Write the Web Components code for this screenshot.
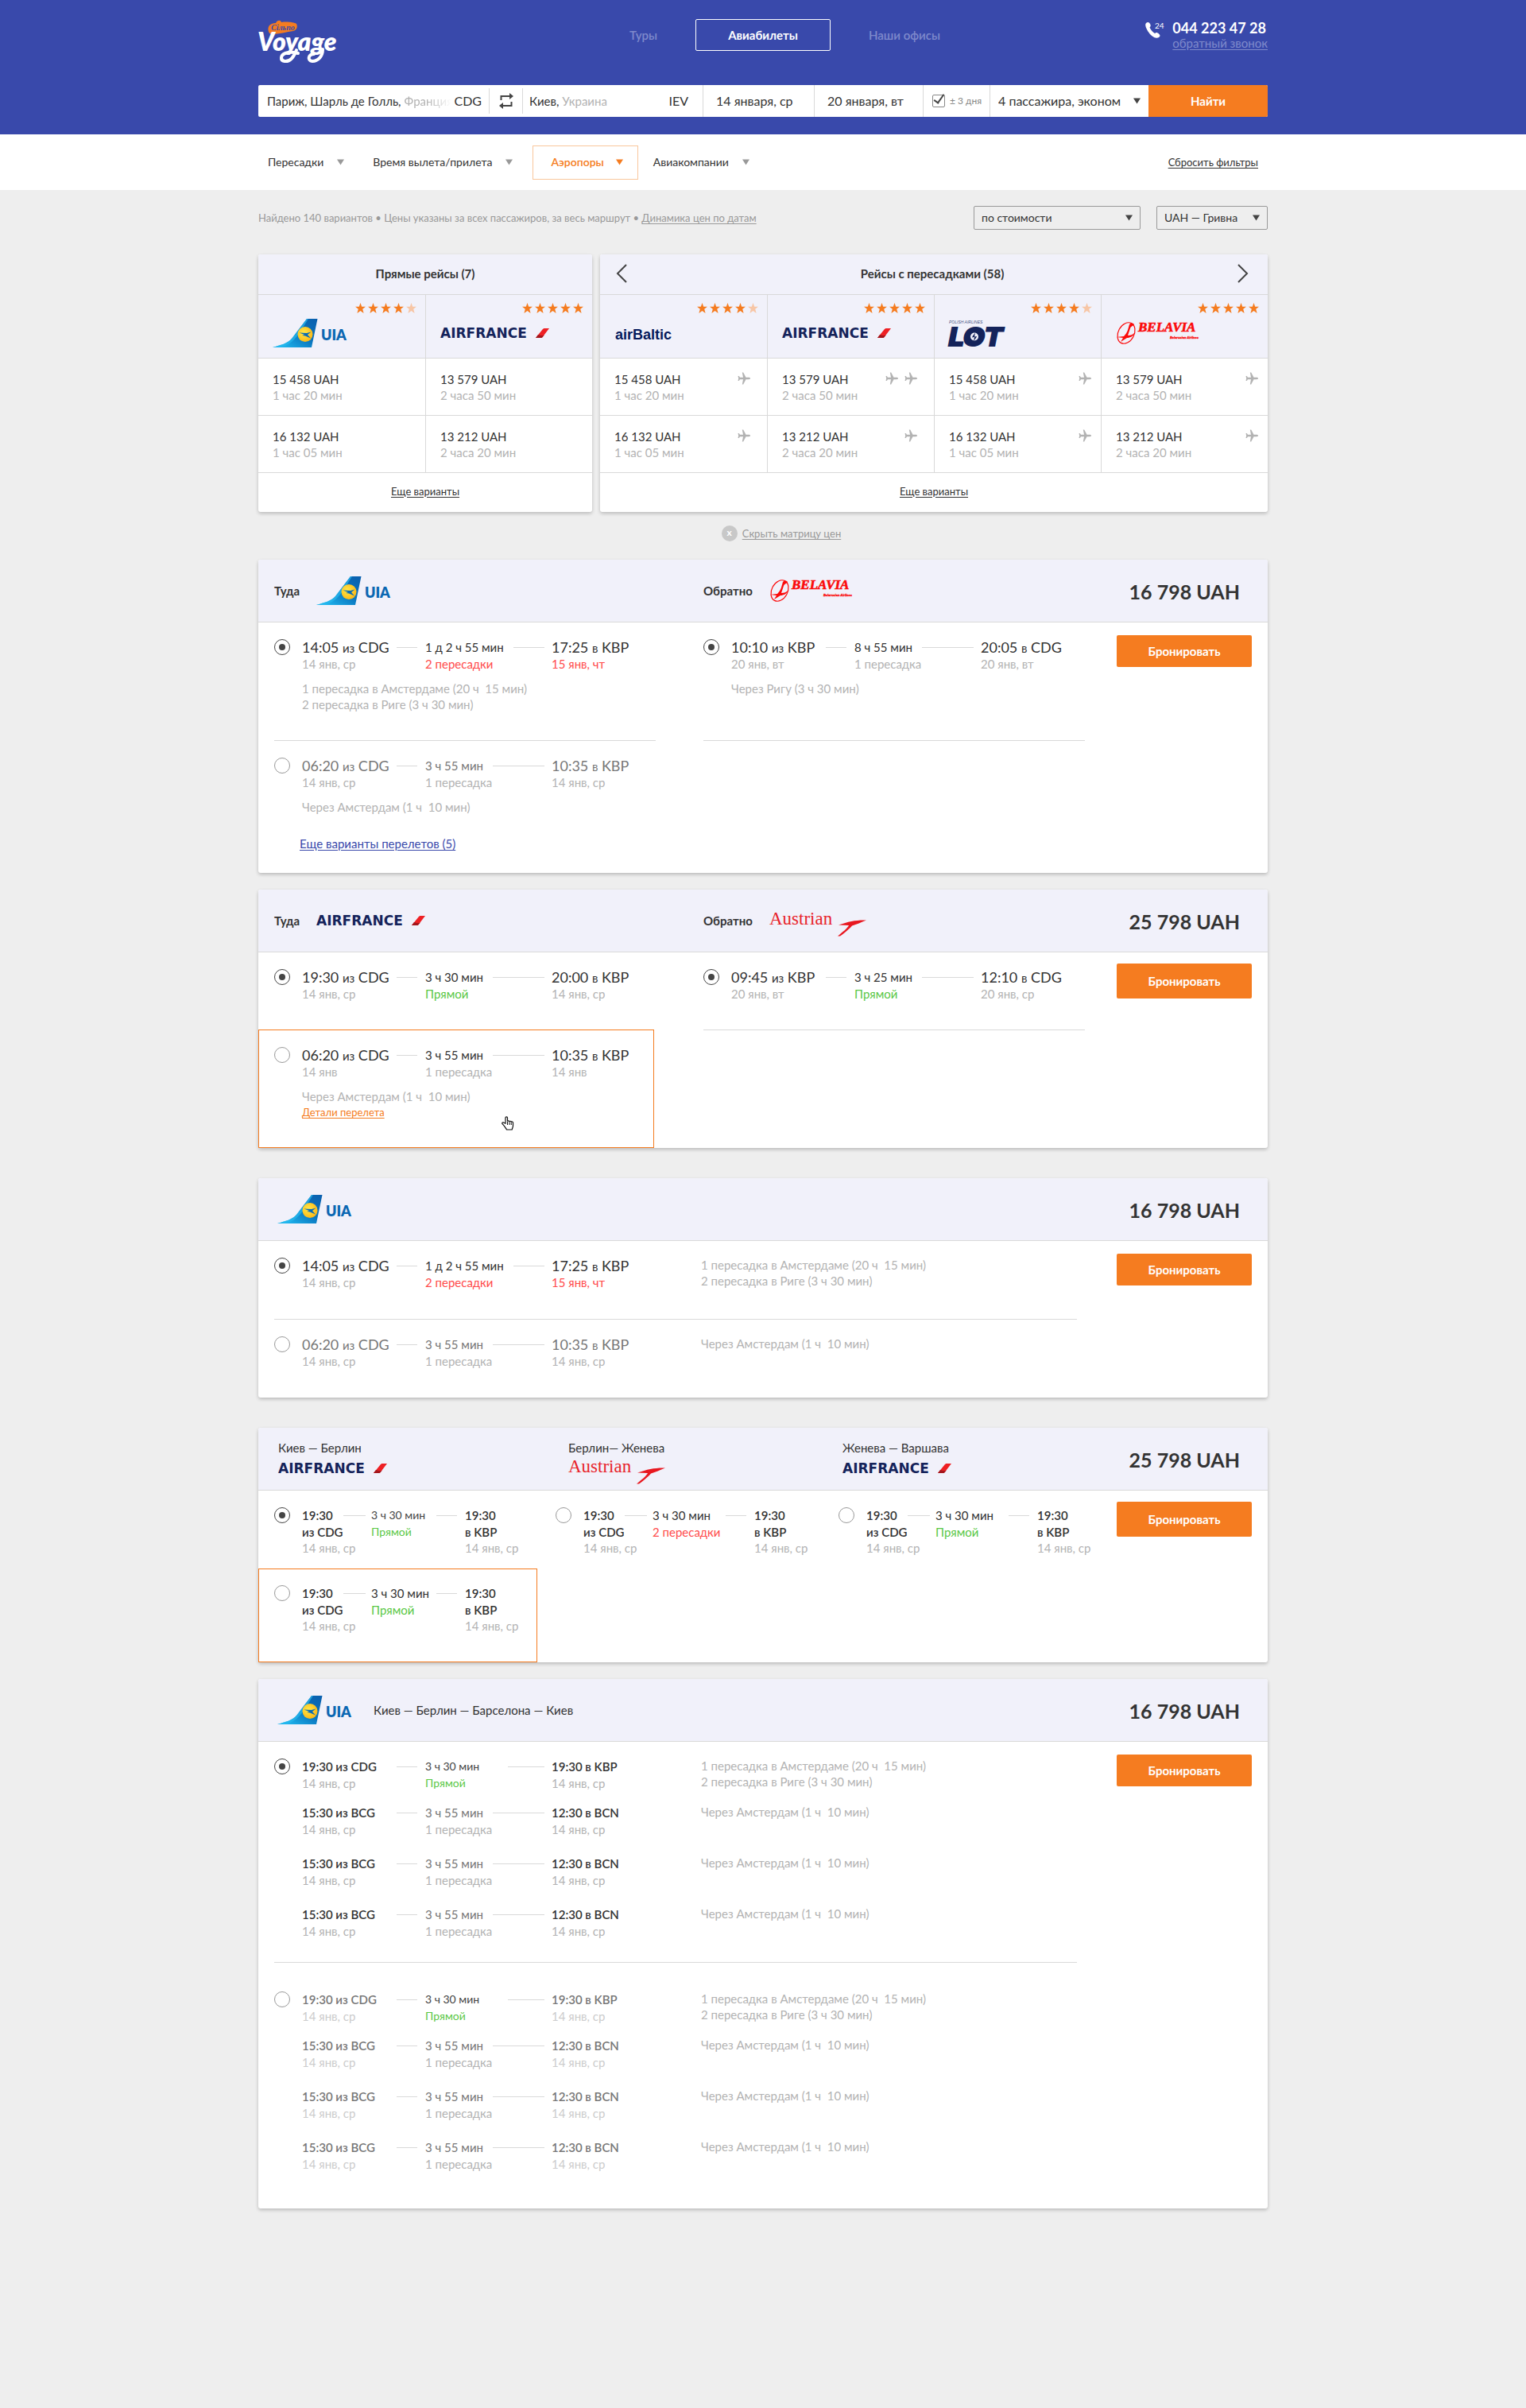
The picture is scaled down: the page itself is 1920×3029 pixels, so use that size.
<!DOCTYPE html>
<html lang="ru">
<head>
<meta charset="utf-8">
<meta name="viewport" content="width=device-width, initial-scale=1">
<title>Voyage — Авиабилеты</title>
<style>
  :root {
    --brand: #3949ab;
    --accent: #f57c20;
    --ink: #333333;
    --soft: #b3b3b3;
    --line: #d9d9d9;
    --tint: #f1f1fa;
    --page: 1270px;
  }
  body {
    margin: 0;
    background: #eeeeee;
    color: var(--ink);
    font: 15px/20px Lato, "Noto Sans", sans-serif;
  }
  main { max-width: var(--page); margin: 0 auto; padding-bottom: 60px; }
  .results { display: flex; flex-direction: column; gap: 38px; }
  .group { display: flex; flex-direction: column; gap: 21px; }
  .way { display: flex; align-items: center; gap: 21px; font-weight: 700; }
  .route { display: flex; flex-direction: column; gap: 4px; }
  .route airline-logo { height: 24px; display: flex; align-items: center; }
  p { margin: 0; }
  a { color: inherit; text-underline-offset: 2px; }
  .more { color: var(--brand); }
  .details { color: var(--accent); font-size: 13px; }
</style>
</head>
<body>

<site-header></site-header>
<filter-bar></filter-bar>

<main>
  <results-toolbar></results-toolbar>
  <price-matrix></price-matrix>

  <div class="results">
    <div class="group">
      <fare-card price="16 798 UAH" layout="two">
        <div slot="head" class="way">Туда <airline-logo name="uia"></airline-logo></div>
        <div slot="head" class="way">Обратно <airline-logo name="belavia"></airline-logo></div>

        <flight-option checked divider>
          <flight-leg dep="14:05" from="CDG" dep-date="14 янв, ср" time="1 д 2 ч 55 мин" stops="2 пересадки" arr="17:25" to="KBP" arr-date="15 янв, чт" late></flight-leg>
          <p slot="note">1 пересадка в Амстердаме (20 ч&nbsp; 15 мин)</p>
          <p slot="note">2 пересадка в Риге (3 ч 30 мин)</p>
        </flight-option>
        <flight-option checked divider>
          <flight-leg dep="10:10" from="KBP" dep-date="20 янв, вт" time="8 ч 55 мин" stops="1 пересадка" arr="20:05" to="CDG" arr-date="20 янв, вт"></flight-leg>
          <p slot="note">Через Ригу (3 ч 30 мин)</p>
        </flight-option>
        <flight-option muted>
          <flight-leg dep="06:20" from="CDG" dep-date="14 янв, ср" time="3 ч 55 мин" stops="1 пересадка" arr="10:35" to="KBP" arr-date="14 янв, ср"></flight-leg>
          <p slot="note">Через Амстердам (1 ч&nbsp; 10 мин)</p>
        </flight-option>
        <a slot="more" class="more" href="#more">Еще варианты перелетов (5)</a>
      </fare-card>

      <fare-card price="25 798 UAH" layout="two" tall>
        <div slot="head" class="way">Туда <airline-logo name="airfrance"></airline-logo></div>
        <div slot="head" class="way">Обратно <airline-logo name="austrian"></airline-logo></div>

        <flight-option checked>
          <flight-leg dep="19:30" from="CDG" dep-date="14 янв, ср" time="3 ч 30 мин" stops="Прямой" arr="20:00" to="KBP" arr-date="14 янв, ср"></flight-leg>
        </flight-option>
        <flight-option checked divider>
          <flight-leg dep="09:45" from="KBP" dep-date="20 янв, вт" time="3 ч 25 мин" stops="Прямой" arr="12:10" to="CDG" arr-date="20 янв, ср"></flight-leg>
        </flight-option>
        <flight-option active pointer>
          <flight-leg dep="06:20" from="CDG" dep-date="14 янв" time="3 ч 55 мин" stops="1 пересадка" arr="10:35" to="KBP" arr-date="14 янв"></flight-leg>
          <p slot="note">Через Амстердам (1 ч&nbsp; 10 мин)</p>
          <a slot="note" class="details" href="#details">Детали перелета</a>
        </flight-option>
      </fare-card>
    </div>

    <div class="group">
      <fare-card price="16 798 UAH" layout="one">
        <airline-logo slot="head" name="uia"></airline-logo>
        <flight-option checked divider side>
          <flight-leg dep="14:05" from="CDG" dep-date="14 янв, ср" time="1 д 2 ч 55 мин" stops="2 пересадки" arr="17:25" to="KBP" arr-date="15 янв, чт" late><p>1 пересадка в Амстердаме (20 ч&nbsp; 15 мин)</p><p>2 пересадка в Риге (3 ч 30 мин)</p></flight-leg>
        </flight-option>
        <flight-option muted side>
          <flight-leg dep="06:20" from="CDG" dep-date="14 янв, ср" time="3 ч 55 мин" stops="1 пересадка" arr="10:35" to="KBP" arr-date="14 янв, ср"><p>Через Амстердам (1 ч&nbsp; 10 мин)</p></flight-leg>
        </flight-option>
      </fare-card>
    </div>

    <div class="group">
      <fare-card price="25 798 UAH" layout="three" tall>
        <div slot="head" class="route">Киев — Берлин <airline-logo name="airfrance"></airline-logo></div>
        <div slot="head" class="route">Берлин— Женева <airline-logo name="austrian"></airline-logo></div>
        <div slot="head" class="route">Женева — Варшава <airline-logo name="airfrance"></airline-logo></div>

        <flight-option checked tight>
          <flight-leg kind="stacked" light dep="19:30" from="CDG" dep-date="14 янв, ср" time="3 ч 30 мин" stops="Прямой" arr="19:30" to="KBP" arr-date="14 янв, ср"></flight-leg>
        </flight-option>
        <flight-option tight>
          <flight-leg kind="stacked" wide dep="19:30" from="CDG" dep-date="14 янв, ср" time="3 ч 30 мин" stops="2 пересадки" late-stops arr="19:30" to="KBP" arr-date="14 янв, ср"></flight-leg>
        </flight-option>
        <flight-option tight>
          <flight-leg kind="stacked" wide dep="19:30" from="CDG" dep-date="14 янв, ср" time="3 ч 30 мин" stops="Прямой" arr="19:30" to="KBP" arr-date="14 янв, ср"></flight-leg>
        </flight-option>
        <flight-option active narrow>
          <flight-leg kind="stacked" dep="19:30" from="CDG" dep-date="14 янв, ср" time="3 ч 30 мин" stops="Прямой" arr="19:30" to="KBP" arr-date="14 янв, ср"></flight-leg>
        </flight-option>
      </fare-card>

      <fare-card price="16 798 UAH" layout="one">
        <airline-logo slot="head" name="uia"></airline-logo>
        <p slot="head">Киев — Берлин — Барселона — Киев</p>

        <flight-option checked divider side multi>
          <flight-leg kind="compact" light short dep="19:30" from="CDG" dep-date="14 янв, ср" time="3 ч 30 мин" stops="Прямой" arr="19:30" to="KBP" arr-date="14 янв, ср"><p>1 пересадка в Амстердаме (20 ч&nbsp; 15 мин)</p><p>2 пересадка в Риге (3 ч 30 мин)</p></flight-leg>
          <flight-leg kind="compact" dim dep="15:30" from="BCG" dep-date="14 янв, ср" time="3 ч 55 мин" stops="1 пересадка" arr="12:30" to="BCN" arr-date="14 янв, ср"><p>Через Амстердам (1 ч&nbsp; 10 мин)</p></flight-leg>
          <flight-leg kind="compact" dim dep="15:30" from="BCG" dep-date="14 янв, ср" time="3 ч 55 мин" stops="1 пересадка" arr="12:30" to="BCN" arr-date="14 янв, ср"><p>Через Амстердам (1 ч&nbsp; 10 мин)</p></flight-leg>
          <flight-leg kind="compact" dim dep="15:30" from="BCG" dep-date="14 янв, ср" time="3 ч 55 мин" stops="1 пересадка" arr="12:30" to="BCN" arr-date="14 янв, ср"><p>Через Амстердам (1 ч&nbsp; 10 мин)</p></flight-leg>
        </flight-option>
        <flight-option muted side multi roomy>
          <flight-leg kind="compact" light short dep="19:30" from="CDG" dep-date="14 янв, ср" time="3 ч 30 мин" stops="Прямой" arr="19:30" to="KBP" arr-date="14 янв, ср"><p>1 пересадка в Амстердаме (20 ч&nbsp; 15 мин)</p><p>2 пересадка в Риге (3 ч 30 мин)</p></flight-leg>
          <flight-leg kind="compact" dim dep="15:30" from="BCG" dep-date="14 янв, ср" time="3 ч 55 мин" stops="1 пересадка" arr="12:30" to="BCN" arr-date="14 янв, ср"><p>Через Амстердам (1 ч&nbsp; 10 мин)</p></flight-leg>
          <flight-leg kind="compact" dim dep="15:30" from="BCG" dep-date="14 янв, ср" time="3 ч 55 мин" stops="1 пересадка" arr="12:30" to="BCN" arr-date="14 янв, ср"><p>Через Амстердам (1 ч&nbsp; 10 мин)</p></flight-leg>
          <flight-leg kind="compact" dim dep="15:30" from="BCG" dep-date="14 янв, ср" time="3 ч 55 мин" stops="1 пересадка" arr="12:30" to="BCN" arr-date="14 янв, ср"><p>Через Амстердам (1 ч&nbsp; 10 мин)</p></flight-leg>
        </flight-option>
      </fare-card>
    </div>
  </div>
</main>

<script>
const base = `
  *, *::before { box-sizing: border-box; }
  button, input, select { font: inherit; color: inherit; margin: 0; padding: 0; border: 0; background: none; border-radius: 0; outline-offset: 2px; }
  button, select { cursor: pointer; }
  p { margin: 0; }
  a { color: inherit; text-underline-offset: 2px; }
`;
const define = (name, render, connected) => customElements.define(name, class extends HTMLElement {
  constructor() { super(); this.attachShadow({ mode: 'open' }); }
  connectedCallback() {
    this.shadowRoot.innerHTML = render(this);
    if (connected) connected(this);
  }
});
const caret = `<svg class="caret" width="9" height="8" viewBox="0 0 9 8" aria-hidden="true"><path d="M0 .5h9L4.500 7.500z" fill="currentColor"/></svg>`;

/* Airline marks */
const logos = {
  uia: `<svg width="93" height="36" viewBox="0 0 93 36" role="img" aria-label="UIA">
    <defs>
      <linearGradient id="tail" x1="0" y1="1" x2="1" y2="0"><stop offset=".1" stop-color="#1fb6ee"/><stop offset=".55" stop-color="#0a74bd"/><stop offset="1" stop-color="#0a5fae"/></linearGradient>
      <radialGradient id="sun" cx=".4" cy=".4" r=".65"><stop offset="0" stop-color="#ffe94a"/><stop offset="1" stop-color="#fbb615"/></radialGradient>
    </defs>
    <path d="M0 36C10 33 19 31 24 25L43 0h13.500L49 36z" fill="url(#tail)"/>
    <path d="M0 36C10 33 19 31 24 25L43 0h2C36 14 32 24 20 32c-5 3-10 4-20 4z" fill="#27b9ee" opacity=".7"/>
    <circle cx="41" cy="19.500" r="9.500" fill="url(#sun)"/>
    <path d="M33.500 17.500l9.500.5 5.500-1.500-4.500 3.500 4 4.500-7-3-4-.5 3-1z" fill="#0a6ab4"/>
    <text x="61" y="27" font-family="Lato, sans-serif" font-weight="800" font-size="18" fill="#0b67b2">UIA</text></svg>`,
  airfrance: `<svg width="138" height="14" viewBox="0 0 138 14" role="img" aria-label="Air France">
    <text x="0" y="13" font-family="DejaVu Sans, sans-serif" font-weight="bold" font-size="17" fill="#14235a">AIRFRANCE</text>
    <path d="M120 13l8.500-10.500c.8-1 1.500-1.500 2.800-1.500H137l-8 10.500c-.8 1-1.500 1.500-2.800 1.500z" fill="#ee2024"/>
    <path d="M120 13l3-4c2 .8 5 1.500 8 .5l-2 2c-.8 1-1.500 1.500-2.800 1.500z" fill="#a3161c"/></svg>`,
  airbaltic: `<svg width="74" height="22" viewBox="0 0 74 22" role="img" aria-label="airBaltic">
    <text x="1" y="19" font-family="Liberation Sans Narrow, Liberation Sans, sans-serif" font-weight="bold" font-size="18" fill="#051a5c">airBaltic</text></svg>`,
  lot: `<svg width="76" height="34" viewBox="0 0 76 34" role="img" aria-label="LOT Polish Airlines">
    <text x="0" y="5" font-family="Liberation Sans, sans-serif" font-style="italic" font-size="5" fill="#4a5685">POLISH AIRLINES</text>
    <text x="-1" y="33" font-family="DejaVu Sans, sans-serif" font-style="italic" font-weight="bold" font-size="32" fill="#14235a" stroke="#14235a" stroke-width="2">LOT</text>
    <circle cx="32" cy="21.500" r="8" fill="#14235a"/><circle cx="32" cy="21.500" r="5" fill="#f1f1fa"/>
    <path d="M33 16.500c-1 2-3 3-4 6l3-.5-1 5c1.500-2 3.500-4 4-6l-3 .5z" fill="#14235a"/></svg>`,
  belavia: `<svg width="106" height="28" viewBox="0 0 106 28" role="img" aria-label="Belavia">
    <ellipse cx="13" cy="14" rx="10" ry="14" transform="rotate(28 13 14)" fill="none" stroke="#fb0a0a" stroke-width="1.200"/>
    <path d="M17 3c3-2 5-1 6 0-1 2-4 2-5 5l-3 9c4 0 6-1 9-4-2 5-6 7-10 7L6 25l3-5-8-1 9-1c2-2 4-5 5-8z" fill="#fb0a0a"/>
    <text x="28" y="12" font-family="Liberation Serif, serif" font-style="italic" font-weight="bold" font-size="17" fill="#fb0a0a" stroke="#fb0a0a" stroke-width=".6">BELAVIA</text>
    <text x="104" y="21" text-anchor="end" font-family="Liberation Sans, sans-serif" font-style="italic" font-weight="bold" font-size="4" fill="#fb0a0a" stroke="#fb0a0a" stroke-width=".3">Belarusian Airlines</text></svg>`,
  austrian: `<svg width="124" height="40" viewBox="0 0 124 40" role="img" aria-label="Austrian">
    <text x="0" y="25" font-family="Liberation Serif, serif" font-weight="400" font-size="23" fill="#e8232a">Austrian</text>
    <path d="M122 19.500C110 19 100 21 87 25.500l13 .5c-2 4-8 8.500-14 13.500h3c6-4 12-9.500 15-13 6-2 11-4 18-7z" fill="#e8171f"/></svg>`
};
define('airline-logo', el => `<style>${base} :host { display: inline-flex; } svg { display: block; overflow: visible; }</style>${logos[el.getAttribute('name')]}`);

/* Star rating out of five */
define('star-rating', el => {
  const n = +el.getAttribute('value');
  const star = i => `<svg width="13" height="13" viewBox="0 0 13 13"><path d="M6.500 0l1.700 4.700H13L9.200 7.800l1.400 5.200-4.100-3.100L2.400 13l1.400-5.200L0 4.700h4.800z" fill="${i < n ? '#f57c20' : '#f7c6a6'}"/></svg>`;
  return `<style>${base} :host { display: flex; gap: 3px; justify-content: flex-end; } svg { display: block; }</style>${[0, 1, 2, 3, 4].map(star).join('')}`;
});

/* Blue top area with logo, navigation, phone and search form */
define('site-header', () => `<style>${base}
  :host { display: block; background: var(--brand); color: #fff; padding: 24px 20px 22px; }
  .wrap { max-width: var(--page); margin: 0 auto; }
  .top { display: grid; grid-template-columns: 1fr auto 1fr; align-items: start; min-height: 83px; }
  .logo { padding-top: 2px; line-height: 0; }
  svg { overflow: visible; }
  nav { display: inline-grid; grid-template-columns: 1fr 170px 1fr; gap: 48px; align-items: center; color: #7f89cb; font-weight: 600; }
  nav a { text-decoration: none; }
  nav a:first-child { justify-self: end; }
  nav .on { color: #fff; border: 1px solid #fff; border-radius: 2px; height: 40px; display: grid; place-items: center; font-weight: 700; }
  .phone { justify-self: end; display: grid; grid-template-columns: auto auto; column-gap: 10px; padding-top: 2px; line-height: 19px; }
  .phone b { font-size: 18px; }
  .phone a { grid-column: 2; color: #7f89cb; }
  .tel { display: flex; padding-top: 2px; height: 19px; }
</style>
<div class="wrap">
  <div class="top">
    <a class="logo" href="#"><svg width="104" height="54" viewBox="0 0 104 54" role="img" aria-label="Сільпо Voyage">
      <path d="M13 14C11 8 14 3 22 3c2-4 6-4 7-1 7-1 16 0 19 2 2 4 0 8-4 9-8 1-18 4-27 4-2 0-3-1-4-3z" fill="#f57c20"/>
      <text x="16" y="12" font-family="Liberation Serif, serif" font-style="italic" font-weight="bold" font-size="10" fill="#3949ab">Сільпо</text>
      <text x="-1" y="38" font-family="Lato, sans-serif" font-style="italic" font-weight="800" font-size="32" fill="#fff">Voyage</text>
      <path d="M50 41c-4-1-10-2-16 0-6 2-7 9-1 10 7 1 12-6 15-14" fill="none" stroke="#fff" stroke-width="4" stroke-linecap="round"/>
      <path d="M70 42c-7 0-9 8-2 9 7 0 13-6 13-15" fill="none" stroke="#fff" stroke-width="4" stroke-linecap="round"/></svg></a>
    <nav><a href="#tours">Туры</a><a class="on" href="#avia">Авиабилеты</a><a href="#offices">Наши офисы</a></nav>
    <div class="phone">
      <span class="tel"><svg width="24" height="20" viewBox="0 0 24 20" aria-hidden="true">
        <path d="M1 1c2-2 4-1 5 1s1 3-.5 4.500C7 10 9 12 12 14c2-1.500 3-1 5 .5s2 3 0 4.500c-4 2-9-1-12.500-6S-1 3 1 1z" fill="#fff"/>
        <text x="12" y="8" font-family="Lato, sans-serif" font-size="10" fill="#fff">24</text></svg></span>
      <b>044 223 47 28</b>
      <a href="#call">обратный звонок</a>
    </div>
  </div>
  <search-form></search-form>
</div>`);

define('search-form', () => `<style>${base}
  :host { display: block; color: var(--ink); font-size: 16px; }
  form { display: grid; grid-template-columns: 290fr 43px 226fr 140px 137px 84px 200px 150px; height: 40px; background: #fff; border-radius: 2px; overflow: hidden; }
  .cell { display: flex; align-items: center; min-width: 0; border-left: 1px solid var(--line); }
  .place { padding: 0 9px 0 11px; border-left: 0; }
  .place.to { padding: 0 18px 0 8px; }
  .place input { field-sizing: content; flex: none; }
  .place input, .place span { font-size: 15px; }
  .place span { color: var(--soft); flex: 1; min-width: 0; overflow: hidden; white-space: nowrap; padding-left: 4px; }
  .fade span { -webkit-mask-image: linear-gradient(90deg, #000 50%, transparent 95%); mask-image: linear-gradient(90deg, #000 50%, transparent 95%); }
  .swap { margin: 4px 0; border-left: 1px solid var(--line); border-right: 1px solid var(--line); display: grid; place-items: center; color: #444; }
  .date { padding-left: 16px; } .date input { width: 100%; }
  .flex { gap: 6px; padding-left: 11px; font-size: 12px; color: #888; }
  .flex input { appearance: none; width: 16px; height: 16px; border: 1px solid #888; border-radius: 2px; position: relative; flex: none; }
  .flex input:checked::before { content: ""; position: absolute; left: 4px; top: -4px; width: 7px; height: 14px; border: solid #444; border-width: 0 2px 2px 0; transform: rotate(35deg); }
  .pax { position: relative; } .pax select { appearance: none; width: 100%; height: 40px; padding-left: 10px; }
  .pax .caret { position: absolute; right: 10px; pointer-events: none; color: #444; }
  .go { background: var(--accent); color: #fff; font-weight: 700; font-size: 15px; }
</style>
<form>
  <label class="cell place fade"><input aria-label="Откуда" value="Париж, Шарль де Голль,"><span>Франция</span>CDG</label>
  <button class="swap" type="button" aria-label="Поменять местами"><svg width="18" height="20" viewBox="0 0 18 20"><path d="M2.500 9V4H13M15.500 11v5H5" fill="none" stroke="currentColor" stroke-width="2"/><path d="M13 0l5 4-5 4zM5 12l-5 4 5 4z" fill="currentColor"/></svg></button>
  <label class="cell place to"><input aria-label="Куда" value="Киев,"><span>Украина</span>IEV</label>
  <div class="cell date"><input aria-label="Дата вылета" value="14 января, ср"></div>
  <div class="cell date"><input aria-label="Дата возвращения" value="20 января, вт"></div>
  <label class="cell flex"><input type="checkbox" checked>± 3 дня</label>
  <div class="cell pax"><select aria-label="Пассажиры и класс"><option>4 пассажира, эконом</option></select>${caret}</div>
  <button class="go" type="button">Найти</button>
</form>`);

/* White strip of filter drop-downs */
define('filter-bar', () => `<style>${base}
  :host { display: block; background: #fff; }
  .wrap { max-width: var(--page); margin: 0 auto; height: 70px; display: flex; align-items: center; gap: 1px; font-size: 14px; }
  button { display: flex; align-items: center; gap: 17px; height: 43px; padding: 0 17px 0 18px; }
  button:first-child { padding-left: 12px; }
  .caret { color: #999; }
  .on { border: 1px solid #f9c79c; color: var(--accent); font-weight: 600; padding: 0 18px 0 22px; gap: 15px; margin-left: 7px; }
  .on .caret { color: var(--accent); }
  a { margin-left: auto; margin-right: 12px; font-size: 13px; }
</style>
<div class="wrap">
  <button>Пересадки ${caret}</button><button>Время вылета/прилета ${caret}</button><button class="on">Аэропоры ${caret}</button><button>Авиакомпании ${caret}</button>
  <a href="#reset">Сбросить фильтры</a>
</div>`);

define('results-toolbar', () => `<style>${base}
  :host { display: flex; align-items: center; gap: 20px; padding: 20px 0 31px; font-size: 14px; color: #999; }
  p { flex: 1; font-size: 13px; }
  .pick { position: relative; display: flex; align-items: center; width: 210px; color: var(--ink); }
  .pick.cur { width: 140px; }
  select { appearance: none; width: 100%; height: 30px; border: 1px solid #999; border-radius: 2px; padding-left: 9px; }
  .caret { position: absolute; right: 10px; pointer-events: none; color: #444; }
</style>
<p>Найдено 140 вариантов • Цены указаны за всех пассажиров, за весь маршрут • <a href="#dyn">Динамика цен по датам</a></p>
<div class="pick"><select aria-label="Сортировка"><option>по стоимости</option></select>${caret}</div>
<div class="pick cur"><select aria-label="Валюта"><option>UAH — Гривна</option></select>${caret}</div>`);

/* Price matrix: direct flights and flights with stops */
const plane = `<svg width="16" height="16" viewBox="0 0 16 16" aria-hidden="true"><path d="M16 8c0 .8-1 1.200-2 1.200h-3.500L7.200 15.500H5.800L7 9.200H3L1.800 11H.5l.7-3-.7-3h1.300L3 6.800h4L5.800.5h1.400l3.300 6.300H14c1 0 2 .4 2 1.200z" fill="#b3b3b3"/></svg>`;
const fareA = [['15 458 UAH', '1 час 20 мин'], ['16 132 UAH', '1 час 05 мин']];
const fareB = [['13 579 UAH', '2 часа 50 мин'], ['13 212 UAH', '2 часа 20 мин']];
const airlines = {
  direct: [['uia', 4, fareA, [0, 0]], ['airfrance', 5, fareB, [0, 0]]],
  stops: [['airbaltic', 4, fareA, [1, 1]], ['airfrance', 5, fareB, [2, 1]], ['lot', 4, fareA, [1, 1]], ['belavia', 5, fareB, [1, 1]]]
};
define('fare-matrix', el => {
  const cols = airlines[el.getAttribute('set')];
  const row = r => `<tr>${cols.map(c => `<td><div><span>${c[2][r][0]}</span><small>${c[2][r][1]}</small><i>${plane.repeat(c[3][r])}</i></div></td>`).join('')}</tr>`;
  return `<style>${base}
    :host { display: flex; flex-direction: column; background: #fff; border-radius: 3px; overflow: hidden; box-shadow: 0 2px 4px rgba(0,0,0,.22); }
    header { display: flex; align-items: center; justify-content: center; height: 50px; padding-bottom: 2px; background: var(--tint); font-weight: 700; }
    table { width: 100%; table-layout: fixed; border-spacing: 0; text-align: left; }
    th, td { padding: 0; border-top: 1px solid var(--line); border-left: 1px solid var(--line); font-weight: 400; }
    th:first-child, td:first-child { border-left: 0; }
    th { height: 80px; background: var(--tint); vertical-align: top; padding: 10px 11px 0 18px; }
    .mark { height: 36px; display: flex; align-items: center; margin-top: 7px; }
    td { height: 72px; }
    td div { display: grid; grid-template-columns: 1fr auto; padding: 0 12px 0 18px; }
    td:nth-child(-n+2) div { padding-right: 21px; }
    small { font-size: 15px; color: var(--soft); grid-row: 2; }
    i { display: flex; gap: 8px; padding-top: 1px; grid-column: 2; grid-row: 1; }
    footer { height: 50px; padding-bottom: 4px; border-top: 1px solid var(--line); display: grid; place-items: center; font-size: 13px; }
  </style>
  <header><slot></slot></header>
  <table><thead><tr>${cols.map(c => `<th scope="col"><star-rating value="${c[1]}"></star-rating><div class="mark"><airline-logo name="${c[0]}"></airline-logo></div></th>`).join('')}</tr></thead>
  <tbody>${row(0)}${row(1)}</tbody></table>
  <footer><a href="#more">Еще варианты</a></footer>`;
});
const chevron = (d, label) => `<button aria-label="${label}"><svg width="14" height="24" viewBox="0 0 14 24"><path d="${d}" fill="none" stroke="#444" stroke-width="2"/></svg></button>`;
define('price-matrix', () => `<style>${base}
  :host { display: block; }
  .cols { display: grid; grid-template-columns: 420fr 840fr; gap: 10px; }
  .nav { flex: 1; display: flex; justify-content: space-between; align-items: center; padding: 0 24px 0 20px; }
  button { display: grid; }
  .hide { display: flex; justify-content: center; align-items: center; gap: 6px; padding: 17px 0 23px 46px; font-size: 13px; color: #999; }
  .hide b { width: 20px; height: 20px; border-radius: 50%; background: #c8c8c8; color: #fff; font-size: 12px; line-height: 18px; text-align: center; }
</style>
<div class="cols">
  <fare-matrix set="direct">Прямые рейсы (7)</fare-matrix>
  <fare-matrix set="stops"><div class="nav">${chevron('M13 1L2 12l11 11', 'Назад')}<span>Рейсы с пересадками (58)</span>${chevron('M1 1l11 11L1 23', 'Вперед')}</div></fare-matrix>
</div>
<div class="hide"><b>x</b><a href="#hide">Скрыть матрицу цен</a></div>`);

/* One priced offer with its flight options */
define('fare-card', el => `<style>${base}
  :host { display: block; background: #fff; border-radius: 3px; box-shadow: 0 2px 4px rgba(0,0,0,.22); }
  header { display: flex; min-height: 79px; background: var(--tint); border-bottom: 1px solid var(--line); border-radius: 3px 3px 0 0; align-items: center; }
  .head, .body { flex: 1; display: grid; min-width: 0; }
  .head { align-items: center; }
  strong { width: 190px; padding: 1px 35px 0 0; font-size: 25px; font-weight: 700; text-align: right; white-space: nowrap; flex: none; }
  .main { display: flex; align-items: flex-start; }
  :host([layout=two]) .head, :host([layout=two]) .body { grid-template-columns: 1fr 1fr; }
  :host([layout=two]) .head ::slotted(*) { padding-left: 20px; }
  :host([layout=one]) .head { display: flex; gap: 28px; padding-left: 24px; }
  :host([layout=three]) .head { grid-template-columns: 365fr 345fr 345fr; padding-left: 25px; }
  :host([layout=three]) .body { grid-template-columns: 354fr 356fr 370fr; }
  aside { width: 190px; padding: 16px 20px 0 0; flex: none; }
  button { display: block; width: 100%; height: 40px; background: var(--accent); color: #fff; border-radius: 2px; font-weight: 700; }
  :host([tall]) aside { padding-top: 14px; }
  :host([tall]) button { height: 44px; }
  footer { padding: 0 0 27px 52px; margin-top: -9px; }
</style>
<header><div class="head"><slot name="head"></slot></div><strong>${el.getAttribute('price')}</strong></header>
<div class="main"><div class="body"><slot></slot></div><aside><button>Бронировать</button></aside></div>
${el.querySelector('[slot=more]') ? '<footer><slot name="more"></slot></footer>' : ''}`,
el => el.addEventListener('pick', e => {
  const step = { two: 2, three: 3 }[el.getAttribute('layout')] || 1;
  const all = [...el.querySelectorAll('flight-option')];
  const column = all.indexOf(e.target) % step;
  all.forEach((o, i) => { if (i % step === column && o !== e.target) o.shadowRoot.querySelector('input').checked = false; });
}));

define('flight-option', el => `<style>${base}
  :host { display: flex; flex-direction: column; position: relative; min-width: 0; }
  :host([muted]) { --ink: #777; }
  :host([muted][multi]) { --date: #cccccc; }
  .box { padding: 20px 0 35px 20px; }
  label { display: flex; gap: 15px; }
  input { appearance: none; flex: none; width: 20px; height: 20px; margin-top: 1px; border: 1px solid #999; border-radius: 50%; background: #fff; display: grid; place-items: center; }
  input:checked { border-color: #444; }
  input:checked::before { content: ""; width: 8px; height: 8px; border-radius: 50%; background: #444; }
  .legs { flex: 1; display: grid; gap: 22px; min-width: 0; }
  .notes { display: flex; flex-direction: column; align-items: flex-start; margin: 11px 0 0 35px; color: var(--soft); }
  hr { width: auto; height: 1px; margin: auto 40px 0 20px; border: 0; background: var(--line); }
  :host([side]) hr { margin-right: 50px; }
  :host([side]) .box { padding-bottom: 36px; }
  :host([active]) .box { border: 1px solid var(--accent); margin: -1px 42px 0 0; padding: 20px 0 34px 19px; }
  :host([active][narrow]) .box { margin: 0 3px 0 0; padding-top: 19px; padding-bottom: 35px; }
  :host([tight]) .box { padding-bottom: 16px; }
  :host([multi]) .box { padding-bottom: 29px; }
  :host([multi]) ::slotted(:nth-child(2)) { margin-top: -6px; }
  :host([roomy]) .box { padding-top: 35px; padding-bottom: 46px; }
  .hand { position: absolute; left: 306px; top: 108px; }
</style>
<div class="box">
  <label><input type="radio" ${el.hasAttribute('checked') ? 'checked' : ''}><span class="legs"><slot></slot></span></label>
  ${el.querySelector('[slot=note]') ? '<div class="notes"><slot name="note"></slot></div>' : ''}
</div>
${el.hasAttribute('divider') ? '<hr>' : ''}
${el.hasAttribute('pointer') ? '<svg class="hand" width="16" height="18" viewBox="0 0 16 18" aria-hidden="true"><path d="M5 9V2c0-1.600 2.500-1.600 2.500 0v4.500c.3-1 2.200-1 2.500.3.400-.9 2.200-.7 2.300.5.600-.7 2.200-.4 2.200 1V12c0 2-1 3-1.300 5H6.500c-.5-1.500-2-3-3.300-5L1 9.600C.3 8.300 2 7.300 3 8.200z" fill="#fff" stroke="#111" stroke-width="1.200"/><path d="M7.500 7v4M10 8v3M12.300 8.500V11" stroke="#111" stroke-width="1"/></svg>' : ''}`,
el => el.shadowRoot.querySelector('input').addEventListener('change', () => el.dispatchEvent(new CustomEvent('pick', { bubbles: true, composed: true }))));

/* Departure — duration — arrival */
define('flight-leg', el => {
  const a = n => el.getAttribute(n) || '';
  const stacked = a('kind') === 'stacked';
  const point = (time, word, code) => stacked ? `<span class="t">${time}</span>` : `<span class="t">${time} <em>${word}</em> ${code}</span>`;
  const under = (word, code) => stacked ? `<span class="c">${word} ${code}</span>` : '';
  const tone = a('stops') === 'Прямой' ? 'ok' : (el.hasAttribute('late') || el.hasAttribute('late-stops')) ? 'bad' : '';
  return `<style>${base}
    :host { display: grid; grid-template-columns: 155px 159px 188px 1fr; }
    .col { display: flex; flex-direction: column; min-width: 0; white-space: nowrap; color: var(--date, var(--soft)); }
    .l { display: flex; align-items: center; height: 22px; color: var(--ink); }
    .l::after { content: ""; height: 1px; background: var(--line); }
    .dep .l::after { width: 26px; margin: 0 10px 0 auto; }
    .mid { color: var(--soft); }
    .mid .l::after { flex: 1; margin: 0 9px 0 12px; }
    .arr .l::after { display: none; }
    .t { font-size: 18px; } em { font-style: normal; font-size: 15px; }
    .ok { color: #5ac846; } .bad { color: #ff4b4b; }
    .note { color: var(--soft); white-space: nowrap; }
    :host([short]) .mid .l::after { flex: none; width: 46px; margin-left: auto; }
    :host([dim]) .mid .l { color: #777; }
    :host([light]) .mid { font-size: 14px; }
    :host([light]) .mid .l { color: #444; }
    :host([kind]) .t, :host([kind]) em { font-size: 15px; font-weight: 600; }
    :host([kind=stacked]) { grid-template-columns: 87px 118px auto; }
    :host([wide]) { grid-template-columns: 87px 128px auto; }
    .c { color: #333; font-weight: 600; }
    :host([kind=stacked]) .dep .l::after { width: 28px; margin-right: 7px; }
    :host([kind=stacked]) .mid .l::after { flex: none; width: 26px; margin: 0 10px 0 auto; }
  </style>
  <span class="col dep"><span class="l">${point(a('dep'), 'из', a('from'))}</span>${under('из', a('from'))}<span>${a('dep-date')}</span></span>
  <span class="col mid"><span class="l">${a('time')}</span><span class="${tone}">${a('stops')}</span></span>
  <span class="col arr"><span class="l">${point(a('arr'), 'в', a('to'))}</span>${under('в', a('to'))}<span class="${el.hasAttribute('late') ? 'bad' : ''}">${a('arr-date')}</span></span>
  ${stacked ? '' : '<span class="note"><slot></slot></span>'}`;
});
</script>
</body>
</html>
